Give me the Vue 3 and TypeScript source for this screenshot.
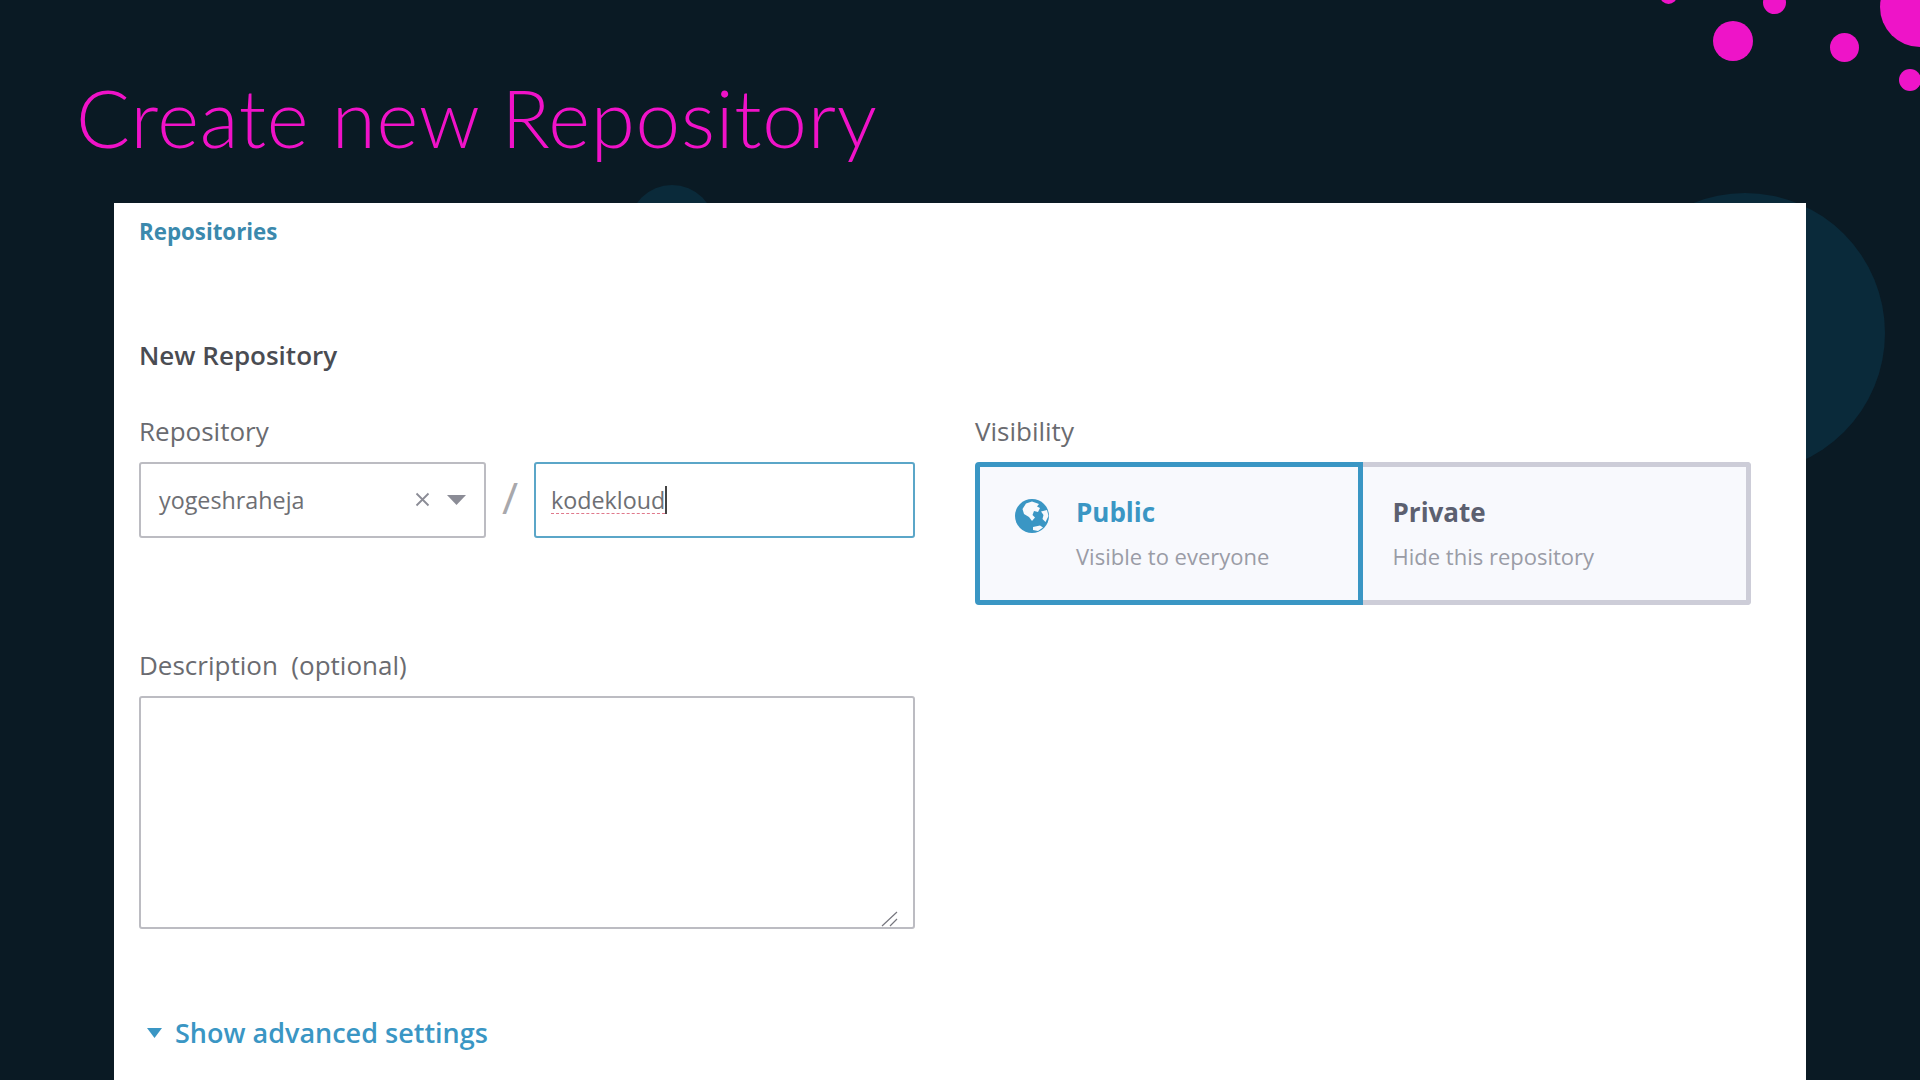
<script setup lang="ts">
interface Option {
  title: string
  sub: string
  active: boolean
}
const options: Option[] = [
  { title: 'Public', sub: 'Visible to everyone', active: true },
  { title: 'Private', sub: 'Hide this repository', active: false },
]
const dots = [
  { x: 1733, y: 41, r: 20 },
  { x: 1844, y: 47, r: 14.5 },
  { x: 1910, y: 80, r: 11 },
  { x: 1774, y: 2, r: 11.5 },
  { x: 1668, y: -5, r: 8.5 },
  { x: 1920, y: 7, r: 40 },
]
function dotStyle(d: { x: number; y: number; r: number }) {
  return { left: `${d.x - d.r}px`, top: `${d.y - d.r}px`, width: `${d.r * 2}px`, height: `${d.r * 2}px` }
}
</script>

<template>
  <div class="slide">
    <div class="halo halo-big"></div>
    <div class="halo halo-small"></div>
    <div v-for="(d, i) in dots" :key="i" class="dot" :style="dotStyle(d)"></div>

    <h1 class="title">Create new Repository</h1>

    <main class="panel">
      <a class="crumb">Repositories</a>
      <h2 class="heading">New Repository</h2>

      <div class="columns">
        <section class="col-left">
          <label class="label">Repository</label>
          <div class="name-row">
            <div class="select">
              <span class="select-value">yogeshraheja</span>
              <svg class="clear" width="15" height="15" viewBox="0 0 15 15">
                <path d="M1.5 1.5 13.5 13.5M13.5 1.5 1.5 13.5" stroke="#8b8c96" stroke-width="1.8" fill="none" />
              </svg>
              <svg class="arrow" width="19" height="10" viewBox="0 0 19 10">
                <path d="M0 0H19L9.5 10Z" fill="#8b8c96" />
              </svg>
            </div>
            <span class="slash">/</span>
            <div class="input"><span class="typed">kodekloud</span><span class="caret"></span></div>
          </div>

          <label class="label desc-label">Description&nbsp; (optional)</label>
          <div class="textarea">
            <svg class="grip" width="18" height="16" viewBox="0 0 18 16">
              <path d="M1 15 16 1M9 15 16 8" stroke="#77777f" stroke-width="1.2" fill="none" />
            </svg>
          </div>
        </section>

        <section class="col-right">
          <label class="label">Visibility</label>
          <div class="toggle">
            <div v-for="o in options" :key="o.title" class="option" :class="{ active: o.active }">
              <svg v-if="o.active" class="globe" width="34" height="34" viewBox="0 0 34 34">
                <circle cx="17" cy="17" r="17" fill="#3a96c4" />
                <path d="M11 4.5 17 2.5 24 5 22 7.5 25 9 23 13 19 12 17.5 16 20 18.5 17 22 14 18 9 15 7.5 10Z" fill="#f7f9fc" />
                <path d="M26 12.5 32 11 33.5 17 30.5 23 27.5 20 28.5 16Z" fill="#f7f9fc" />
                <path d="M18 28 25 26.5 28 28.5 23 32 18 31Z" fill="#f7f9fc" />
              </svg>
              <div class="option-text">
                <div class="option-title">{{ o.title }}</div>
                <div class="option-sub">{{ o.sub }}</div>
              </div>
            </div>
          </div>
        </section>
      </div>

      <div class="advanced">
        <svg width="15" height="10" viewBox="0 0 15 10"><path d="M0 0H15L7.5 10Z" fill="#3a96c4" /></svg>
        <span>Show advanced settings</span>
      </div>
    </main>
  </div>
</template>

<style>
html, body { margin: 0; background: #0a1a24; }
</style>

<style scoped>
.slide {
  position: relative;
  width: 1920px;
  height: 1080px;
  overflow: hidden;
  background: #0a1a24;
  display: flex;
  flex-direction: column;
  font-family: "Open Sans", sans-serif;
}
.halo {
  position: absolute;
  border-radius: 50%;
  background: #0a2a3a;
}
.halo-big { left: 1605px; top: 193px; width: 280px; height: 280px; }
.halo-small { left: 629px; top: 185px; width: 86px; height: 86px; }
.dot {
  position: absolute;
  border-radius: 50%;
  background: #ee14c8;
}
.title {
  position: relative;
  margin: 0;
  height: 203px;
  box-sizing: border-box;
  padding: 69px 0 0 76px;
  font-family: Lato, sans-serif;
  font-weight: 300;
  font-size: 80px;
  letter-spacing: 0.75px;
  line-height: 96px;
  color: #f012c8;
  white-space: nowrap;
}
.panel {
  position: relative;
  margin-left: 114px;
  width: 1692px;
  flex: 1;
  box-sizing: border-box;
  background: #fff;
  padding: 15px 25px 0;
  display: flex;
  flex-direction: column;
}
.crumb {
  font-size: 22.3px;
  line-height: 28px;
  font-weight: 700;
  color: #3b89ad;
}
.heading {
  margin: 92px 0 0;
  font-size: 26px;
  line-height: 34px;
  font-weight: 600;
  color: #4a4c52;
}
.columns {
  display: flex;
  gap: 60px;
  margin-top: 42px;
}
.col-left { width: 776px; display: flex; flex-direction: column; }
.col-right { width: 776px; display: flex; flex-direction: column; }
.label {
  display: block;
  font-size: 26px;
  line-height: 34px;
  color: #6a6b70;
  margin-bottom: 14px;
}
.name-row { display: flex; align-items: stretch; height: 76px; }
.select {
  width: 347px;
  box-sizing: border-box;
  border: 2px solid #bcbcc2;
  border-radius: 3px;
  display: flex;
  align-items: center;
  padding: 0 18px;
  color: #6e6f74;
}
.select-value { font-size: 23.3px; flex: 1; }
.clear { margin-right: 17px; margin-top: -2px; }
.arrow { margin-top: 0; }
.slash {
  width: 48px;
  text-align: center;
  font-size: 44px;
  font-weight: 400;
  line-height: 70px;
  color: #a8a8ac;
}
.input {
  width: 381px;
  box-sizing: border-box;
  border: 2px solid #5ba6c8;
  border-radius: 3px;
  display: flex;
  align-items: center;
  padding: 0 15px;
  font-size: 23.3px;
  color: #6e6f74;
}
.typed {
  text-decoration: underline dashed #e0798c 1px;
  text-underline-offset: 4px;
}
.caret { width: 1.5px; height: 28px; background: #444; }
.desc-label { margin-top: 110px; }
.textarea {
  position: relative;
  height: 233px;
  box-sizing: border-box;
  border: 2px solid #bcbcc2;
  border-radius: 3px;
}
.grip { position: absolute; right: 14px; bottom: 0; }
.toggle { display: flex; height: 143px; }
.option {
  width: 389px;
  box-sizing: border-box;
  border: 5px solid #cdcdd8;
  border-left: none;
  background: #f8f9fd;
  border-radius: 0 4px 4px 0;
  display: flex;
  padding: 0 0 0 30px;
  color: #5c6070;
}
.option.active {
  width: 388px;
  border: 5px solid #3a96c4;
  border-radius: 4px 0 0 4px;
  padding-left: 35px;
  color: #3a96c4;
}
.globe { margin-top: 32px; margin-right: 27px; flex: none; }
.option-text { padding-top: 27px; }
.option-title { font-size: 26px; line-height: 36px; font-weight: 700; }
.option-sub { font-size: 22px; line-height: 30px; color: #9a9ca6; margin-top: 11px; }
.advanced {
  display: flex;
  align-items: center;
  gap: 13px;
  margin-top: 86px;
  margin-left: 8px;
  font-size: 27px;
  line-height: 36px;
  font-weight: 600;
  color: #3a96c4;
}
</style>
